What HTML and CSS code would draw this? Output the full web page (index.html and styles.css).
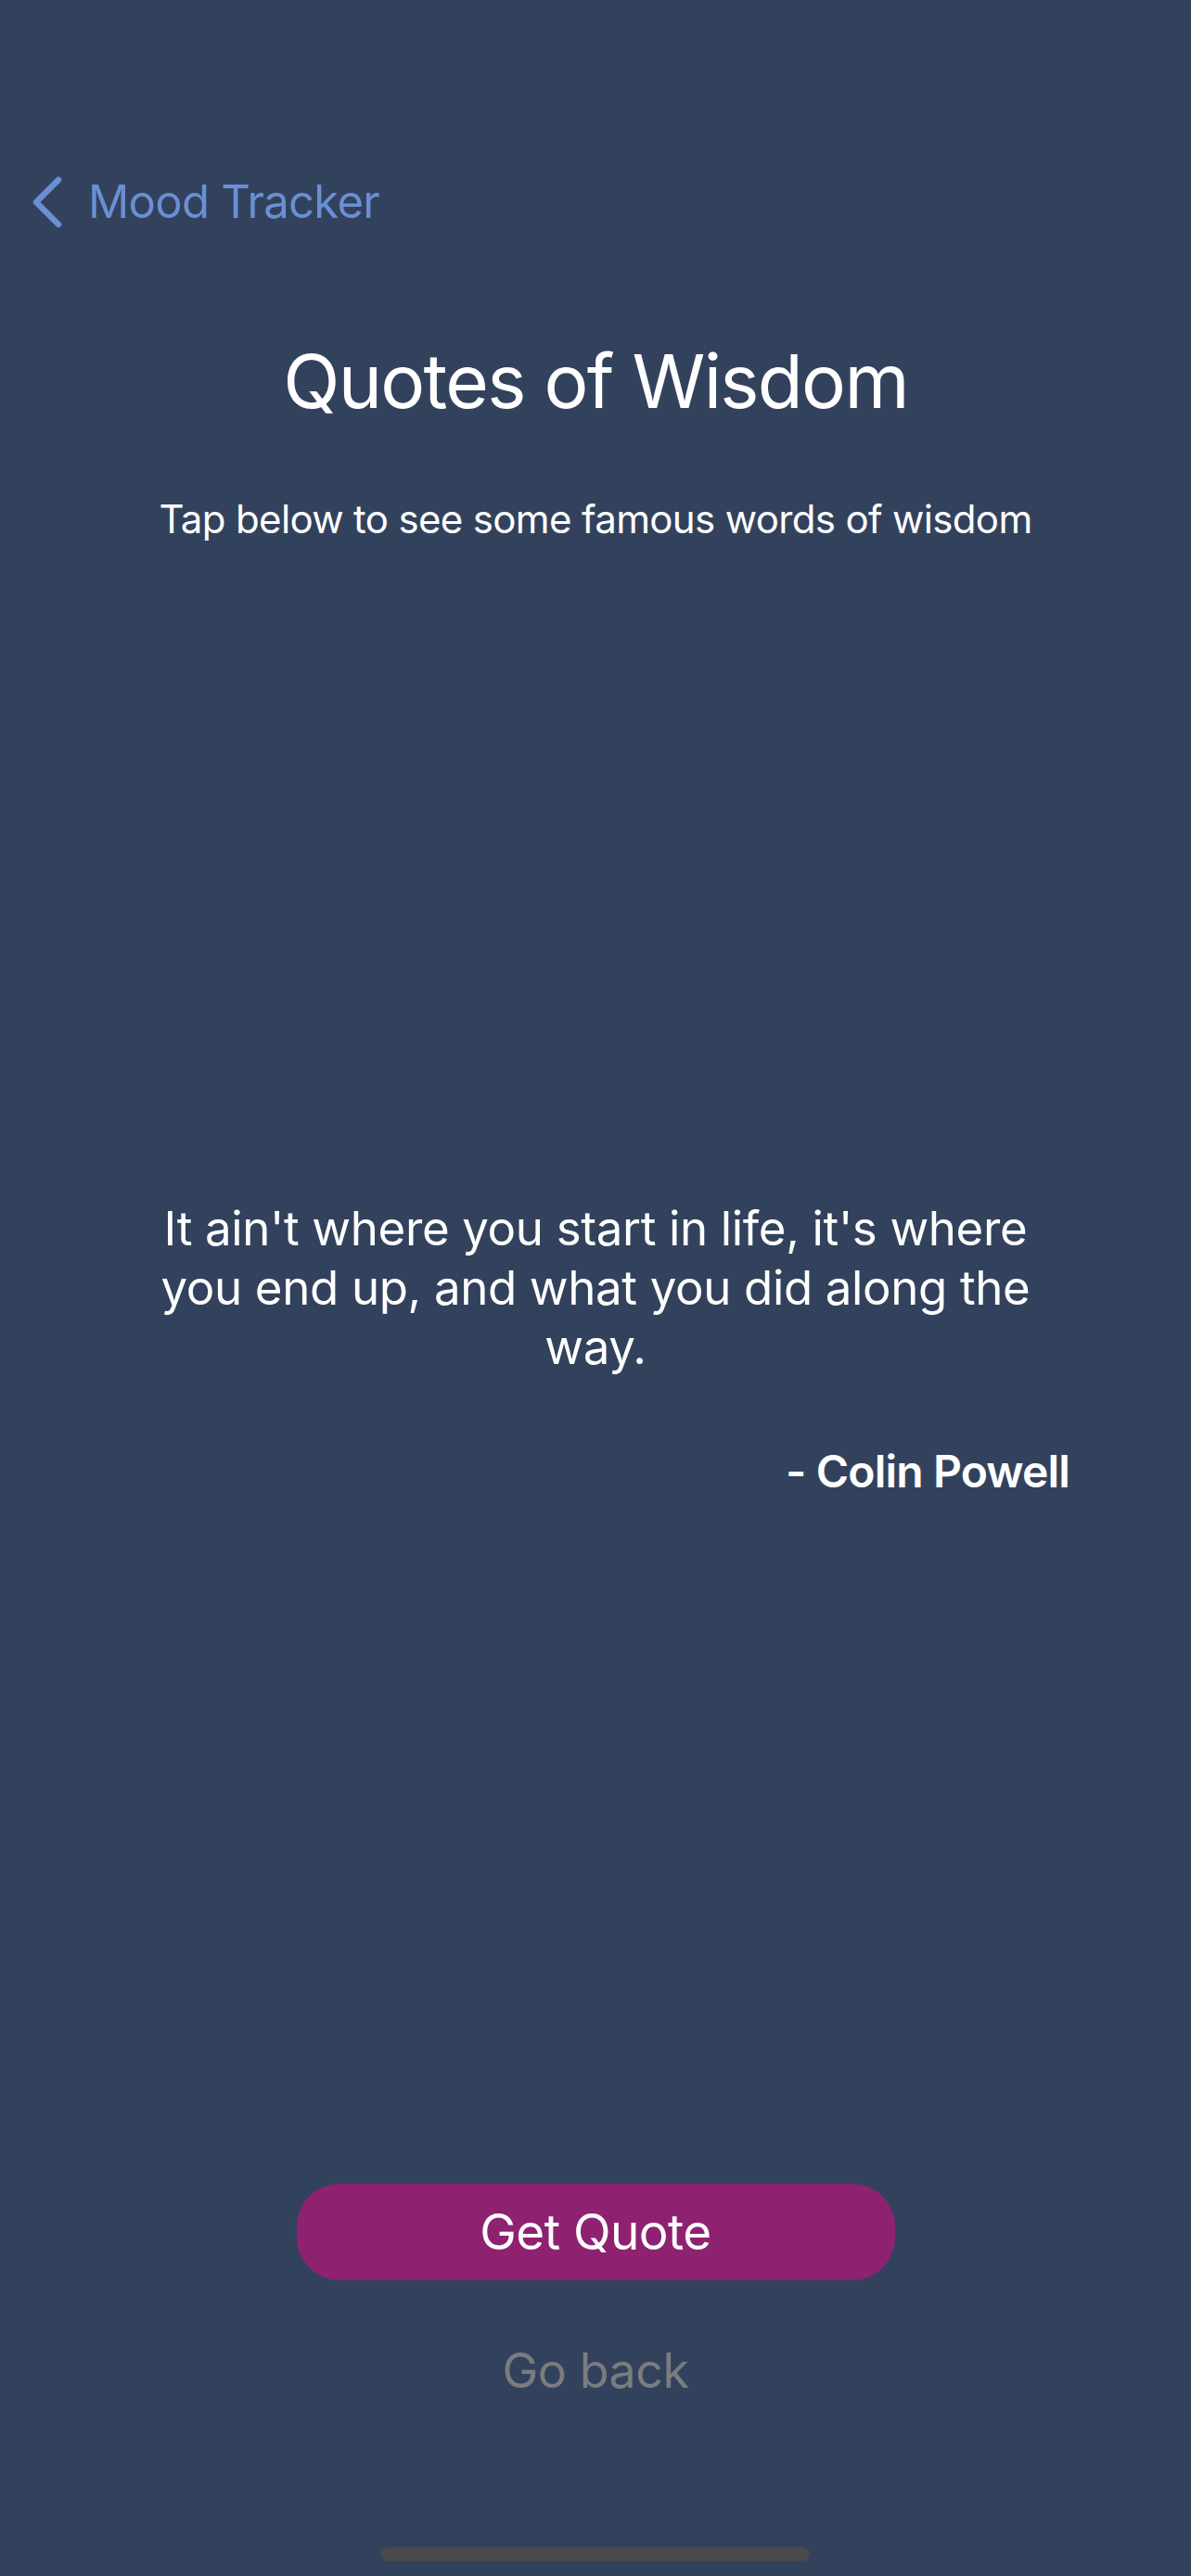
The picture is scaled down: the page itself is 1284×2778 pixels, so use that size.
FILE: index.html
```html
<!DOCTYPE html>
<html lang="en">
<head>
<meta charset="utf-8">
<title>Quotes of Wisdom</title>
<link rel="stylesheet" href="styles.css">
</head>
<body>
<div class="screen">
  <nav class="nav">
    <a class="back" href="#">
      <svg class="chev" viewBox="0 0 34 56" width="34" height="56" aria-hidden="true">
        <path d="M29 4 L5 28 L29 52" fill="none" stroke="currentColor" stroke-width="6.5" stroke-linecap="round" stroke-linejoin="round"/>
      </svg>
      <span class="back-label">Mood Tracker</span>
    </a>
  </nav>
  <h1 class="title">Quotes of Wisdom</h1>
  <p class="subtitle">Tap below to see some famous words of wisdom</p>
  <main class="quote-area">
    <div class="quote-box">
      <p class="quote">It ain't where you start in life, it's where you end up, and what you did along the way.</p>
      <p class="author">- Colin Powell</p>
    </div>
  </main>
  <button class="primary" type="button">Get Quote</button>
  <a class="secondary" href="#">Go back</a>
  <div class="home-indicator"></div>
</div>
</body>
</html>
```

FILE: styles.css
```css
html, body {
  margin: 0;
  padding: 0;
  background: #33425c;
}

.screen {
  width: 1284px;
  height: 2778px;
  box-sizing: border-box;
  padding-bottom: 16px;
  display: flex;
  flex-direction: column;
  align-items: center;
  font-family: Inter, "Noto Sans", "Liberation Sans", sans-serif;
  color: #ffffff;
  overflow: hidden;
}

.nav {
  align-self: stretch;
  padding: 188px 0 0 37px;
  height: 60px;
}

.back {
  display: flex;
  align-items: center;
  gap: 27px;
  color: #6a8fd4;
  text-decoration: none;
  height: 60px;
}

.chev {
  display: block;
  width: 34px;
  height: 56px;
  margin-left: -3px;
}

.back-label {
  font-size: 49px;
  line-height: 60px;
  letter-spacing: -0.7px;
}

.title {
  margin: 113px 0 0;
  font-size: 80px;
  line-height: 100px;
  font-weight: 400;
  letter-spacing: -1.7px;
}

.subtitle {
  margin: 72px 0 0;
  font-size: 42px;
  line-height: 54px;
  letter-spacing: -0.65px;
}

.quote-area {
  flex: 1;
  align-self: stretch;
  display: flex;
  flex-direction: column;
  justify-content: center;
  padding: 0 131px 32px;
}

.quote-box {
  display: flex;
  flex-direction: column;
}

.quote {
  margin: 0;
  padding: 0 30px;
  text-align: center;
  font-size: 51px;
  line-height: 64px;
  letter-spacing: -0.35px;
}

.author {
  margin: 72px 0 0;
  text-align: right;
  font-size: 48px;
  line-height: 60px;
  font-weight: 600;
  letter-spacing: -0.85px;
}

.primary {
  width: 645px;
  height: 104px;
  border: none;
  border-radius: 46px;
  background: #8e2271;
  color: #ffffff;
  font-family: inherit;
  font-size: 53px;
  letter-spacing: -0.5px;
  padding: 0;
}

.secondary {
  margin-top: 68px;
  font-size: 52px;
  line-height: 60px;
  color: #7a7c80;
  text-decoration: none;
  letter-spacing: -0.5px;
}

.home-indicator {
  margin-top: 160px;
  width: 462px;
  height: 15px;
  border-radius: 8px;
  background: #4a4a4a;
}
```
